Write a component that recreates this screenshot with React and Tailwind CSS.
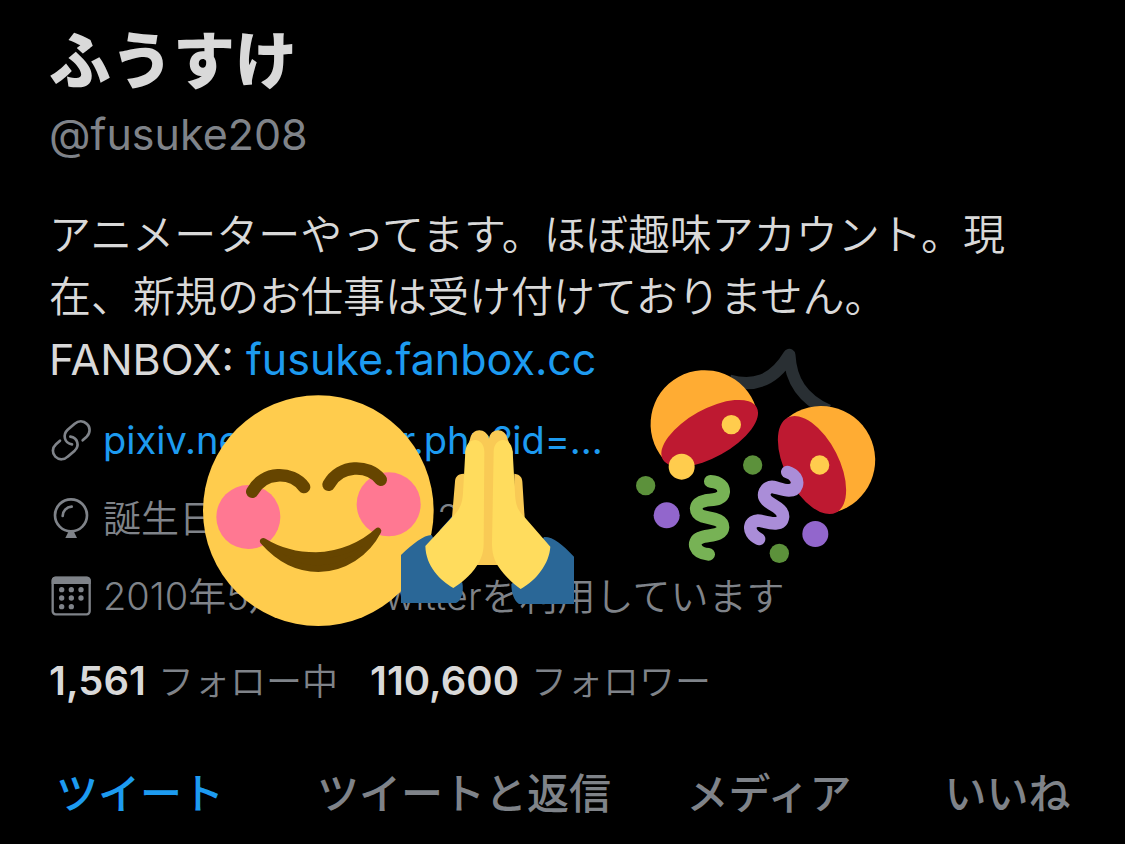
import React from "react";

const tabs = [
  { label: "ツイート", active: true },
  { label: "ツイートと返信" },
  { label: "メディア" },
  { label: "いいね" },
];

const stats = [
  { count: "1,561", label: "フォロー中" },
  { count: "110,600", label: "フォロワー" },
];

const LinkIcon = () => (
  <svg
    viewBox="10 9 120 120"
    className="w-10 h-10 shrink-0 overflow-visible"
    fill="none"
    stroke="currentColor"
    strokeWidth="8"
    strokeLinecap="round"
    aria-hidden="true"
  >
    <path d="M105 70 L117 59 C129 47 128 30 118 21 C107 10 92 11 81 20 L60 38 C44 53 50 79 73 82" />
    <path d="M37 71 L25 82 C13 93 13 109 23 119 C34 130 50 129 60 119 L81 101 C96 86 91 63 68 59" />
  </svg>
);

const BalloonIcon = () => (
  <svg
    viewBox="34 260 120 120"
    className="w-10 h-10 shrink-0 overflow-visible"
    fill="none"
    stroke="currentColor"
    strokeWidth="8"
    strokeLinecap="round"
    aria-hidden="true"
  >
    <circle cx="94" cy="312" r="48" />
    <path d="M69 314 C69 299 80 287 96 286" />
    <path d="M87 360 L77 380 H112 L102 360 Z" fill="currentColor" stroke="none" />
  </svg>
);

const CalendarIcon = () => (
  <svg
    viewBox="34 496 120 120"
    className="w-10 h-10 shrink-0"
    fill="currentColor"
    aria-hidden="true"
  >
    <rect x="39" y="501" width="111" height="110" rx="9" fill="none" stroke="currentColor" strokeWidth="7" />
    <path d="M36 520 V510 Q36 498 48 498 H141 Q153 498 153 510 V520 Z" />
    <circle cx="66" cy="537" r="8" />
    <circle cx="95" cy="537" r="8" />
    <circle cx="124" cy="537" r="8" />
    <circle cx="66" cy="562" r="8" />
    <circle cx="95" cy="562" r="8" />
    <circle cx="124" cy="562" r="8" />
    <circle cx="66" cy="588" r="8" />
    <circle cx="95" cy="588" r="8" />
  </svg>
);

const SmileSticker = () => (
  <svg
    viewBox="0 0 810 780"
    className="absolute left-[180px] top-[380px] w-[270px] h-[260px] pointer-events-none"
    aria-hidden="true"
  >
    <circle cx="415" cy="392" r="346" fill="#ffcc4d" />
    <circle cx="205" cy="411" r="96" fill="#ff7892" />
    <circle cx="626" cy="373" r="96" fill="#ff7892" />
    <g fill="none" stroke="#664500" strokeWidth="38" strokeLinecap="round">
      <path d="M217 335 C250 272 335 272 372 321" />
      <path d="M446 314 C480 252 565 252 602 299" />
    </g>
    <path
      d="M250 484 C300 515 350 527 408 527 C480 525 550 495 594 453 C560 520 490 566 415 566 C350 566 295 535 250 484 Z"
      fill="#664500"
      stroke="#664500"
      strokeWidth="20"
      strokeLinejoin="round"
    />
  </svg>
);

const PraySticker = () => (
  <svg
    viewBox="0 0 600 630"
    className="absolute left-[390px] top-[410px] w-[200px] h-[210px] pointer-events-none"
    aria-hidden="true"
  >
    <g fill="#2a6797">
      <path d="M125 375 C100 376 70 400 33 435 V579 H198 C214 572 222 545 217 518 L190 500 Z" />
      <path d="M462 381 C490 380 515 402 552 440 V582 H387 C372 572 364 548 364 522 L392 500 Z" />
    </g>
    <g fill="#f9ca55">
      <path d="M226 125 L240 88 C246 50 291 54 297 86 C302 52 347 52 353 88 L368 125 L340 465 H255 Z" />
      <path d="M222 191 C200 192 196 203 195 215 L186 322 L222 310 Z" />
      <path d="M373 191 C392 194 396 203 397 215 L404 324 L370 310 Z" />
    </g>
    <g fill="#ffdc5d">
      <path d="M219 250 L226 125 C230 76 283 80 283 125 L281 400 C281 430 272 450 262 465 C240 500 210 522 190 534 C150 510 108 470 106 408 L186 322 C205 302 216 290 219 250 Z" />
      <path d="M375 250 L368 125 C364 76 311 80 311 125 L306 400 C306 430 313 450 322 465 C345 500 370 522 392 537 C440 510 478 460 481 410 L404 322 C385 302 377 290 375 250 Z" />
    </g>
  </svg>
);

const PartySticker = () => (
  <svg
    viewBox="0 0 810 720"
    className="absolute left-[620px] top-[340px] w-[270px] h-[240px] pointer-events-none"
    aria-hidden="true"
  >
    <path
      d="M328 122 C400 142 460 125 508 45 C512 120 545 175 625 212"
      fill="none"
      stroke="#292f33"
      strokeWidth="37"
      strokeLinejoin="round"
    />
    <g fill="#ffac33">
      <path d="M130 357 A162 162 0 1 1 408 203 Z" />
      <path d="M502 234 A162 162 0 1 1 648 516 Z" />
    </g>
    <g fill="#be1931">
      <ellipse cx="269" cy="280" rx="161" ry="72" transform="rotate(-29 269 280)" />
      <ellipse cx="576" cy="375" rx="160" ry="81" transform="rotate(63 576 375)" />
    </g>
    <g fill="#ffcc4d">
      <circle cx="334" cy="254" r="29" />
      <circle cx="185" cy="380" r="39" />
      <circle cx="599" cy="375" r="29" />
    </g>
    <g fill="#5c913b">
      <circle cx="77" cy="437" r="29" />
      <circle cx="398" cy="375" r="29" />
      <circle cx="478" cy="640" r="29" />
    </g>
    <g fill="#9266cc">
      <circle cx="140" cy="526" r="39" />
      <circle cx="586" cy="582" r="39" />
    </g>
    <g fill="none" strokeWidth="38" strokeLinecap="round">
      <path
        stroke="#77b255"
        d="M271 424 C300 426 312 440 311 456 C308 482 275 478 255 482 C220 488 222 522 248 529 C270 536 309 535 309 562 C308 590 262 584 240 594 C215 604 222 640 266 643"
      />
      <path
        stroke="#aa8dd8"
        d="M502 396 C525 403 535 420 530 436 C520 465 480 445 460 441 C435 438 425 465 440 481 C455 497 490 505 489 530 C485 562 445 548 418 542 C390 538 375 575 417 597"
      />
    </g>
  </svg>
);

const InfoRow = ({ icon, children }) => (
  <li className="flex items-center gap-3 h-[78px] whitespace-nowrap">
    {icon}
    {children}
  </li>
);

const App = () => {
  return (
    <main
      lang="ja"
      className="relative min-h-screen overflow-hidden bg-black text-[#d9d9d9] font-[Inter,'Noto_Sans_CJK_JP',sans-serif]"
    >
      <header className="px-[49px] pt-[26px]">
        <h1 className="text-[62px] leading-[72px] font-black">ふうすけ</h1>
        <p className="mt-[6px] text-[43px] leading-[60px] text-[#7f8389]">@fusuke208</p>
      </header>

      <section className="pl-[49px] pr-[70px] pt-10">
        <p className="text-[42px] leading-[62px] font-[350]">
          アニメーターやってます。ほぼ趣味アカウント。現在、新規のお仕事は受け付けておりません。
          <br />
          <span className="text-[43px] font-normal">
            FANBOX:{" "}
            <a href="#fanbox" className="text-[#1d9bf0]">
              fusuke.fanbox.cc
            </a>
          </span>
        </p>

        <ul className="mt-[10px] pl-[2px] text-[38px] leading-[48px] text-[#7f8389]">
          <InfoRow icon={<LinkIcon />}>
            <a href="#pixiv" className="text-[#1d9bf0]">
              pixiv.net/member.php?id=...
            </a>
          </InfoRow>
          <InfoRow icon={<BalloonIcon />}>
            <span className="font-[350]">誕生日: 1990年10月2日</span>
          </InfoRow>
          <InfoRow icon={<CalendarIcon />}>
            <span className="font-[350]">2010年5月からTwitterを利用しています</span>
          </InfoRow>
        </ul>

        <div className="flex gap-8 mt-5 text-[36px] leading-[52px]">
          {stats.map((stat) => (
            <a key={stat.label} href="#follow" className="flex items-baseline gap-3 whitespace-nowrap">
              <span className="text-[40px] font-semibold">{stat.count}</span>
              <span className="font-[350] text-[#7f8389]">{stat.label}</span>
            </a>
          ))}
        </div>
      </section>

      <nav className="grid grid-cols-[280fr_368fr_242fr_235fr] mt-[50px] text-[42px] leading-[72px] font-medium">
        {tabs.map((tab) => (
          <button
            key={tab.label}
            type="button"
            className={
              tab.active
                ? "text-center whitespace-nowrap text-[#1d9bf0]"
                : "text-center whitespace-nowrap text-[#7f8389]"
            }
          >
            {tab.label}
          </button>
        ))}
      </nav>

      <SmileSticker />
      <PraySticker />
      <PartySticker />
    </main>
  );
};

export default App;
